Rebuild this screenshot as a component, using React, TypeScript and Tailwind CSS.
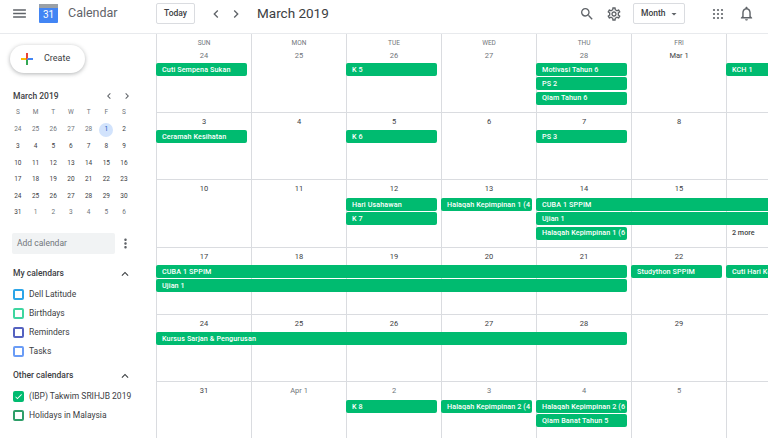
import { MdMenu, MdSearch, MdOutlineSettings, MdChevronLeft, MdChevronRight, MdOutlineNotifications, MdMoreVert, MdExpandLess, MdCheck, MdArrowDropDown } from 'react-icons/md'

type Ev = { t: string; c: number; s?: number; r?: number }

interface Week {
  h: string
  rows: string
  days: { d: string; w?: string; muted?: boolean }[]
  ev: Ev[]
  more?: { c: number; r: number; t: string }
}

const weeks: Week[] = [
  {
    h: 'h-[79px]',
    rows: 'grid-rows-[29px_14.33px_14.33px_14.33px_1fr]',
    days: [
      { d: '24', w: 'SUN', muted: true },
      { d: '25', w: 'MON', muted: true },
      { d: '26', w: 'TUE', muted: true },
      { d: '27', w: 'WED', muted: true },
      { d: '28', w: 'THU', muted: true },
      { d: 'Mar 1', w: 'FRI' },
      { d: '2', w: 'SAT' },
    ],
    ev: [
      { t: 'Cuti Sempena Sukan', c: 1 },
      { t: 'K 5', c: 3 },
      { t: 'Motivasi Tahun 6', c: 5, r: 1 },
      { t: 'PS 2', c: 5, r: 2 },
      { t: 'Qiam Tahun 6', c: 5, r: 3 },
      { t: 'KCH 1', c: 7 },
    ],
  },
  {
    h: 'h-[67px]',
    rows: 'grid-rows-[17px_14.33px_14.33px_14.33px_1fr]',
    days: [{ d: '3' }, { d: '4' }, { d: '5' }, { d: '6' }, { d: '7' }, { d: '8' }, { d: '9' }],
    ev: [
      { t: 'Ceramah Kesihatan', c: 1 },
      { t: 'K 6', c: 3 },
      { t: 'PS 3', c: 5 },
    ],
  },
  {
    h: 'h-[68px]',
    rows: 'grid-rows-[18px_14.33px_14.33px_14.33px_1fr]',
    days: [{ d: '10' }, { d: '11' }, { d: '12' }, { d: '13' }, { d: '14' }, { d: '15' }, { d: '16' }],
    ev: [
      { t: 'Hari Usahawan', c: 3, r: 1 },
      { t: 'K 7', c: 3, r: 2 },
      { t: 'Halaqah Kepimpinan 1 (4', c: 4, r: 1 },
      { t: 'CUBA 1 SPPIM', c: 5, s: 3, r: 1 },
      { t: 'Ujian 1', c: 5, s: 3, r: 2 },
      { t: 'Halaqah Kepimpinan 1 (6 Mac)', c: 5, r: 3 },
    ],
    more: { c: 7, r: 3, t: '2 more' },
  },
  {
    h: 'h-[67px]',
    rows: 'grid-rows-[17px_14.33px_14.33px_14.33px_1fr]',
    days: [{ d: '17' }, { d: '18' }, { d: '19' }, { d: '20' }, { d: '21' }, { d: '22' }, { d: '23' }],
    ev: [
      { t: 'CUBA 1 SPPIM', c: 1, s: 5, r: 1 },
      { t: 'Ujian 1', c: 1, s: 5, r: 2 },
      { t: 'Studython SPPIM', c: 6, r: 1 },
      { t: 'Cuti Hari Kebangsaan', c: 7, r: 1 },
    ],
  },
  {
    h: 'h-[67px]',
    rows: 'grid-rows-[17px_14.33px_14.33px_14.33px_1fr]',
    days: [{ d: '24' }, { d: '25' }, { d: '26' }, { d: '27' }, { d: '28' }, { d: '29' }, { d: '30' }],
    ev: [{ t: 'Kursus Sarjan & Pengurusan', c: 1, s: 5 }],
  },
  {
    h: 'h-[67px]',
    rows: 'grid-rows-[18px_14.33px_14.33px_14.33px_1fr]',
    days: [
      { d: '31' },
      { d: 'Apr 1', muted: true },
      { d: '2', muted: true },
      { d: '3', muted: true },
      { d: '4', muted: true },
      { d: '5', muted: true },
      { d: '6', muted: true },
    ],
    ev: [
      { t: 'K 8', c: 3 },
      { t: 'Halaqah Kepimpinan 2 (4', c: 4 },
      { t: 'Halaqah Kepimpinan 2 (6 Mac)', c: 5, r: 1 },
      { t: 'Qiam Banat Tahun 5', c: 5, r: 2 },
    ],
  },
]

const miniWeeks = [
  ['24', '25', '26', '27', '28', '1', '2'],
  ['3', '4', '5', '6', '7', '8', '9'],
  ['10', '11', '12', '13', '14', '15', '16'],
  ['17', '18', '19', '20', '21', '22', '23'],
  ['24', '25', '26', '27', '28', '29', '30'],
  ['31', '1', '2', '3', '4', '5', '6'],
]

const myCals = [
  { n: 'Dell Latitude', c: 'border-[#2ba5e8]' },
  { n: 'Birthdays', c: 'border-[#3ed6a0]' },
  { n: 'Reminders', c: 'border-[#5562c0]' },
  { n: 'Tasks', c: 'border-[#6a9cf6]' },
]

function Cal({ n, c, on }: { n: string; c: string; on?: boolean }) {
  return (
    <div className="flex h-[19px] items-center pl-[13px]">
      <div className={`flex h-[11px] w-[11px] items-center justify-center rounded-[2px] border-2 ${c} ${on ? 'bg-[#00bb70]' : ''}`}>
        {on && <MdCheck className="shrink-0 text-[9px] text-white" />}
      </div>
      <span className="ml-[5px] whitespace-nowrap text-[8.5px] text-[#3c4043]">{n}</span>
    </div>
  )
}

function Sidebar() {
  return (
    <aside className="flex w-[156px] shrink-0 flex-col">
      <div className="ml-[10px] mt-[11px] flex h-[28px] w-[75px] items-center rounded-full bg-white shadow-[0_1px_4px_rgba(60,64,67,0.4)]">
        <svg viewBox="0 0 36 36" className="ml-[8px] h-[18px] w-[18px]">
          <path fill="#34A853" d="M16 16v14h4V20z" />
          <path fill="#4285F4" d="M30 16H20l-4 4h14z" />
          <path fill="#FBBC05" d="M6 16v4h10l4-4z" />
          <path fill="#EA4335" d="M20 16V6h-4v14z" />
        </svg>
        <span className="ml-[8px] text-[9px] text-[#3c4043]">Create</span>
      </div>

      <div className="mt-[15px] flex h-[16px] items-center pl-[13px] pr-[23px]">
        <span className="text-[8.5px] font-medium text-[#3c4043]">March 2019</span>
        <MdChevronLeft className="ml-auto text-[12px] text-[#5f6368]" />
        <MdChevronRight className="ml-[6px] text-[12px] text-[#5f6368]" />
      </div>

      <div className="grid grid-cols-[repeat(7,17.7px)] pl-[9px]">
        {['S', 'M', 'T', 'W', 'T', 'F', 'S'].map((d, i) => (
          <div key={i} className="flex h-[18px] items-center justify-center text-[6.5px] text-[#70757a]">
            {d}
          </div>
        ))}
        {miniWeeks.flatMap((w, wi) =>
          w.map((d, i) => {
            const muted = (wi === 0 && i < 5) || (wi === 5 && i > 0)
            const today = wi === 0 && i === 5
            return (
              <div key={`${wi}-${i}`} className="flex h-[16.6px] items-center justify-center">
                <span
                  className={`flex h-[14px] w-[14px] items-center justify-center rounded-full text-[6.5px] ${
                    today ? 'bg-[#d2e3fc] text-[#185abc]' : muted ? 'text-[#70757a]' : 'text-[#3c4043]'
                  }`}
                >
                  {d}
                </span>
              </div>
            )
          })
        )}
      </div>

      <div className="mt-[11px] flex items-center pl-[12px]">
        <div className="flex h-[21px] w-[103px] items-center rounded-[2px] bg-[#f1f3f4] pl-[5px] text-[8.5px] text-[#70757a]">
          Add calendar
        </div>
        <MdMoreVert className="ml-[3px] text-[15px] text-[#5f6368]" />
      </div>

      <div className="mt-[11px] flex h-[18px] items-center pl-[13px] pr-[24px]">
        <span className="text-[8.5px] font-medium text-[#3c4043]">My calendars</span>
        <MdExpandLess className="ml-auto text-[14px] text-[#3c4043]" />
      </div>
      <div className="mt-[2px]">
        {myCals.map((m) => (
          <Cal key={m.n} n={m.n} c={m.c} />
        ))}
      </div>

      <div className="mt-[6px] flex h-[18px] items-center pl-[13px] pr-[24px]">
        <span className="text-[8.5px] font-medium text-[#3c4043]">Other calendars</span>
        <MdExpandLess className="ml-auto text-[14px] text-[#3c4043]" />
      </div>
      <div className="mt-[2px]">
        <Cal n="(IBP) Takwim SRIHJB 2019" c="border-[#00bb70]" on />
        <Cal n="Holidays in Malaysia" c="border-[#2e9e68]" />
      </div>
    </aside>
  )
}

function WeekRow({ w }: { w: Week }) {
  return (
    <div className={`grid w-[665px] shrink-0 grid-cols-[repeat(7,95px)] border-b border-[#dadce0] ${w.h} ${w.rows}`}>
      {w.days.map((d, i) => (
        <div
          key={i}
          style={{ gridColumn: i + 1, gridRow: '1 / 6' }}
          className="flex flex-col items-center border-l border-[#dadce0]"
        >
          {d.w && <div className="mt-[5px] text-[6.5px] leading-[9px] text-[#70757a]">{d.w}</div>}
          <div className={`text-[7.5px] leading-[12px] ${d.w ? 'mt-[2px]' : 'mt-[3px]'} ${d.muted ? 'text-[#70757a]' : 'text-[#3c4043]'}`}>
            {d.d}
          </div>
        </div>
      ))}
      {w.ev.map((e, i) => (
        <div
          key={i}
          style={{ gridColumn: `${e.c} / span ${e.s ?? 1}`, gridRow: (e.r ?? 1) + 1 }}
          className="z-10 mr-[4px] flex h-[13px] items-center overflow-hidden whitespace-nowrap rounded-[2px] bg-[#00bb70] pl-[6px] pt-[1px] text-[7.2px] font-medium tracking-[0.1px] text-white"
        >
          {e.t}
        </div>
      ))}
      {w.more && (
        <div
          style={{ gridColumn: w.more.c, gridRow: w.more.r + 1 }}
          className="z-10 flex h-[13px] items-center pl-[6px] pt-[1px] text-[7.2px] font-medium text-[#3c4043]"
        >
          {w.more.t}
        </div>
      )}
    </div>
  )
}

export default function App() {
  return (
    <div className="flex h-[438px] w-[768px] flex-col overflow-hidden bg-white font-['Roboto',sans-serif]">
      <header className="flex h-[34px] shrink-0 items-center border-b border-[#e8eaed] pb-[8px] pt-[2px]">
        <MdMenu className="ml-[11px] text-[17px] text-[#5f6368]" />
        <div className="ml-[11px] flex h-[19px] w-[19px] flex-col overflow-hidden rounded-[1px] bg-[#4285f4]">
          <div className="h-[4px] bg-[#9aa0a6]" />
          <div className="flex-1 text-center text-[10px] leading-[14px] text-white">31</div>
        </div>
        <span className="ml-[10px] w-[88px] text-[12.5px] text-[#5f6368]">Calendar</span>
        <div className="flex h-[21px] w-[39px] items-center justify-center rounded-[2px] border border-[#dadce0] text-[8.5px] font-medium text-[#3c4043]">
          Today
        </div>
        <MdChevronLeft className="ml-[13px] text-[16px] text-[#5f6368]" />
        <MdChevronRight className="ml-[4px] text-[16px] text-[#5f6368]" />
        <span className="ml-[13px] text-[13.5px] text-[#3c4043]">March 2019</span>
        <MdSearch className="ml-auto text-[16px] text-[#5f6368]" />
        <MdOutlineSettings className="ml-[11px] text-[16px] text-[#5f6368]" />
        <div className="ml-[11px] flex h-[21px] w-[52px] items-center rounded-[2px] border border-[#dadce0] pl-[7px] text-[8.5px] font-medium text-[#3c4043]">
          Month
          <MdArrowDropDown className="ml-[2px] text-[12px] text-[#5f6368]" />
        </div>
        <svg viewBox="0 0 12 12" className="ml-[27px] h-[12px] w-[12px] fill-[#5f6368]">
          {[2, 6, 10].flatMap((y) => [2, 6, 10].map((x) => <circle key={`${x}-${y}`} cx={x} cy={y} r="1.1" />))}
        </svg>
        <MdOutlineNotifications className="ml-[14px] mr-[13px] text-[17px] text-[#5f6368]" />
      </header>
      <div className="flex min-h-0 flex-1">
        <Sidebar />
        <main className="flex min-w-0 flex-1 flex-col overflow-hidden">
          {weeks.map((w, i) => (
            <WeekRow key={i} w={w} />
          ))}
        </main>
      </div>
    </div>
  )
}
